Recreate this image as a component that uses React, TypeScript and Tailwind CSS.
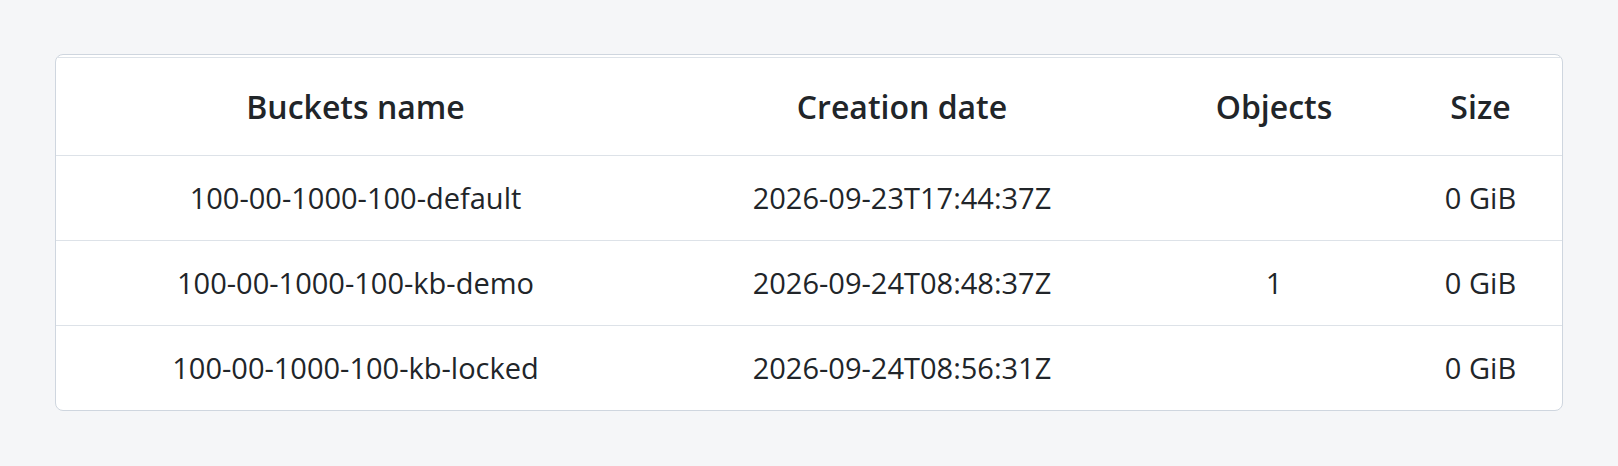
const buckets = [
  { name: "100-00-1000-100-default", created: "2026-09-23T17:44:37Z", objects: "", size: "0 GiB" },
  { name: "100-00-1000-100-kb-demo", created: "2026-09-24T08:48:37Z", objects: "1", size: "0 GiB" },
  { name: "100-00-1000-100-kb-locked", created: "2026-09-24T08:56:31Z", objects: "", size: "0 GiB" },
]

export default function App() {
  return (
    <div className="min-h-[466px] bg-[#f5f6f8] px-[55px] pt-[54px] pb-[55px] font-['Open_Sans',sans-serif] text-[#212529]">
      <div className="rounded-lg border border-[#cfd6df] bg-white pt-[2px] overflow-hidden">
        <table className="w-full border-collapse table-fixed border-t border-[#dde2e8]">
          <colgroup>
            <col className="w-[599px]" />
            <col className="w-[494px]" />
            <col className="w-[250px]" />
            <col />
          </colgroup>
          <thead>
            <tr className="h-[98px] border-b border-[#dde2e8]">
              <th className="text-center text-[32px] font-semibold">Buckets name</th>
              <th className="text-center text-[32px] font-semibold">Creation date</th>
              <th className="text-center text-[32px] font-semibold">Objects</th>
              <th className="text-center text-[32px] font-semibold">Size</th>
            </tr>
          </thead>
          <tbody>
            {buckets.map((b, i) => (
              <tr key={b.name} className={i < buckets.length - 1 ? "h-[85px] border-b border-[#dde2e8]" : "h-[84px]"}>
                <td className="text-center text-[29px]">{b.name}</td>
                <td className="text-center text-[29px]">{b.created}</td>
                <td className="text-center text-[29px]">{b.objects}</td>
                <td className="text-center text-[29px]">{b.size}</td>
              </tr>
            ))}
          </tbody>
        </table>
      </div>
    </div>
  )
}
